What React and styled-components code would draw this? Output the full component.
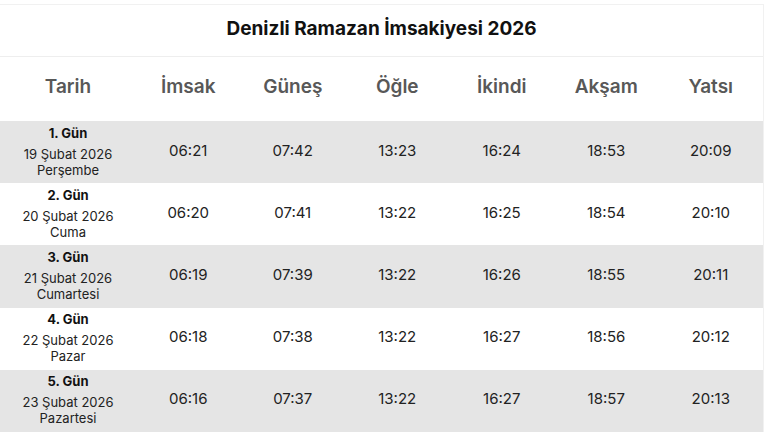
import React from 'react'
import styled, { createGlobalStyle } from 'styled-components'

const days = [
  { n: 1, date: '19 Şubat 2026', day: 'Perşembe', times: ['06:21', '07:42', '13:23', '16:24', '18:53', '20:09'] },
  { n: 2, date: '20 Şubat 2026', day: 'Cuma', times: ['06:20', '07:41', '13:22', '16:25', '18:54', '20:10'] },
  { n: 3, date: '21 Şubat 2026', day: 'Cumartesi', times: ['06:19', '07:39', '13:22', '16:26', '18:55', '20:11'] },
  { n: 4, date: '22 Şubat 2026', day: 'Pazar', times: ['06:18', '07:38', '13:22', '16:27', '18:56', '20:12'] },
  { n: 5, date: '23 Şubat 2026', day: 'Pazartesi', times: ['06:16', '07:37', '13:22', '16:27', '18:57', '20:13'] },
]

const heads = ['Tarih', 'İmsak', 'Güneş', 'Öğle', 'İkindi', 'Akşam', 'Yatsı']

function App() {
  return (
    <>
      <GlobalStyle />
      <Table>
        <Title>Denizli Ramazan İmsakiyesi 2026</Title>
        <HeadRow>
          {heads.map(h => <HeadCell key={h}>{h}</HeadCell>)}
        </HeadRow>
        {days.map(d => (
          <Row key={d.n} $shade={d.n % 2 === 1}>
            <DateCell>
              <strong>{d.n}. Gün</strong>
              <span>{d.date}</span>
              <span>{d.day}</span>
            </DateCell>
            {d.times.map((t, i) => <Cell key={i}>{t}</Cell>)}
          </Row>
        ))}
      </Table>
    </>
  )
}

const GlobalStyle = createGlobalStyle`
  body {
    margin: 0;
    background: #fff;
    font-family: Inter, "Noto Sans", sans-serif;
  }
`

const Table = styled.div`
  width: 763px;
  margin-top: 4px;
  border-top: 1px solid #f1f1f1;
  border-right: 1px solid #f1f1f1;
`

const Title = styled.div`
  height: 52px;
  display: flex;
  align-items: center;
  justify-content: center;
  font-size: 19px;
  font-weight: 700;
  color: #111;
  border-bottom: 1px solid #eeeeee;
  padding-bottom: 4px;
  box-sizing: border-box;
`

const grid = `
  display: grid;
  grid-template-columns: 136px repeat(6, 1fr);
`

const HeadRow = styled.div`
  ${grid}
  height: 64px;
`

const HeadCell = styled.div`
  display: flex;
  align-items: center;
  justify-content: center;
  font-size: 19px;
  font-weight: 600;
  color: #585858;
  padding-bottom: 6px;
`

const Row = styled.div`
  ${grid}
  height: 62.2px;
  background: ${p => (p.$shade ? '#e5e5e5' : '#fff')};
`

const Cell = styled.div`
  display: flex;
  align-items: center;
  justify-content: center;
  font-size: 15px;
  color: #222;
  padding-bottom: 4px;
`

const DateCell = styled.div`
  display: flex;
  flex-direction: column;
  align-items: center;
  justify-content: center;
  font-size: 13px;
  color: #222;
  line-height: 16px;
  padding-bottom: 2px;
  strong {
    font-weight: 700;
    color: #111;
    margin-bottom: 5px;
  }
`

export default App
